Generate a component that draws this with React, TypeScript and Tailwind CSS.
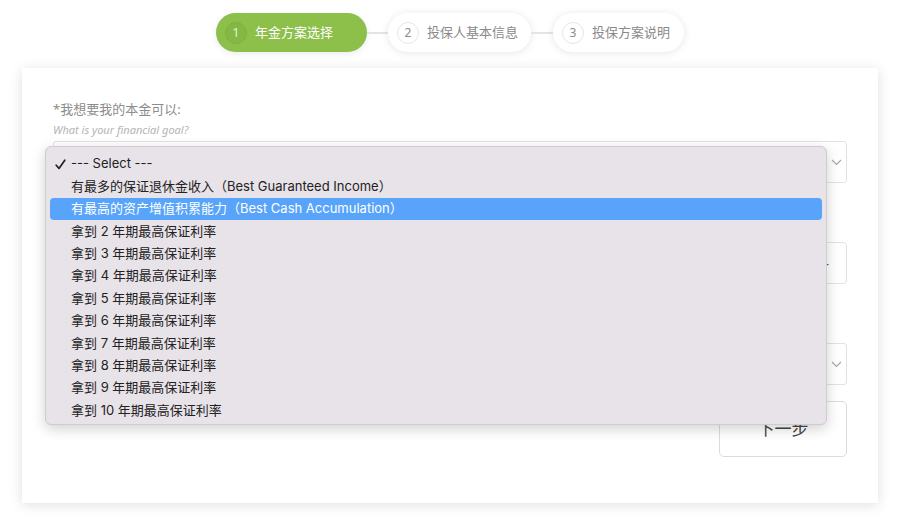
import React from "react";

const items = [
  "有最多的保证退休金收入（Best Guaranteed Income）",
  "有最高的资产增值积累能力（Best Cash Accumulation）",
  "拿到 2 年期最高保证利率",
  "拿到 3 年期最高保证利率",
  "拿到 4 年期最高保证利率",
  "拿到 5 年期最高保证利率",
  "拿到 6 年期最高保证利率",
  "拿到 7 年期最高保证利率",
  "拿到 8 年期最高保证利率",
  "拿到 9 年期最高保证利率",
  "拿到 10 年期最高保证利率",
];

function Chevron() {
  return (
    <svg width="11" height="7" viewBox="0 0 11 7" className="shrink-0">
      <path d="M1 1l4.5 4.5L10 1" fill="none" stroke="#a8a8a8" strokeWidth="1.2" />
    </svg>
  );
}

function Step({ n, label, active, w }: { n: number; label: string; active?: boolean; w: string }) {
  return (
    <div
      className={`${w} h-[39px] rounded-full flex items-center pl-[9px] ${
        active
          ? "bg-[#8cc04b] shadow-[0_2px_6px_rgba(0,0,0,0.08)]"
          : "bg-white shadow-[0_1px_8px_rgba(0,0,0,0.10)]"
      }`}
    >
      <div
        className={`w-[22px] h-[22px] rounded-full flex items-center justify-center text-[12px] ${
          active
            ? "bg-[#84b845] border border-[#7fb040] text-[#e8f3da]"
            : "bg-white border border-[#e6e6e6] text-[#8a8a8a]"
        }`}
      >
        {n}
      </div>
      <span className={`ml-[8px] text-[13px] ${active ? "text-white" : "text-[#8a8a8a]"}`}>{label}</span>
    </div>
  );
}

export default function App() {
  return (
    <div
      className="w-[900px] h-[520px] bg-white overflow-hidden relative"
      style={{ fontFamily: '"Noto Sans", "Noto Sans CJK SC", sans-serif' }}
    >
      <div className="flex items-center justify-center pt-[13px]">
        <Step n={1} label="年金方案选择" active w="w-[151px]" />
        <div className="w-[21px] h-[2px] bg-[#e4e4e4]" />
        <Step n={2} label="投保人基本信息" w="w-[143px]" />
        <div className="w-[22px] h-[2px] bg-[#e4e4e4]" />
        <Step n={3} label="投保方案说明" w="w-[131px]" />
      </div>

      <div className="relative mx-[22px] mt-[16px] bg-white shadow-[0_2px_12px_rgba(0,0,0,0.13)] px-[31px] pt-[32px] pb-[46px]">
        <div className="text-[13px] leading-[18px] text-[#8c8c8c]">*我想要我的本金可以:</div>
        <div className="mt-[4px] text-[11px] leading-[16px] italic text-[#b4b4b4]">What is your financial goal?</div>
        <div className="mt-[3px] h-[42px] border border-[#e2e2e2] rounded-[3px] flex items-center justify-end pr-[4px]">
          <Chevron />
        </div>

        <div className="mt-[59px] flex h-[42px]">
          <div className="flex-1 border border-[#e2e2e2] rounded-l-[3px]" />
          <div className="w-[128px] border border-[#e2e2e2] rounded-[4px] flex items-center justify-end pr-[17px] text-[14px] text-[#555]">
            -
          </div>
        </div>

        <div className="mt-[59px] h-[42px] border border-[#e2e2e2] rounded-[3px] flex items-center justify-end pr-[4px]">
          <Chevron />
        </div>

        <div className="mt-[16px] flex justify-end">
          <div className="w-[128px] h-[56px] border border-[#dcdcdc] rounded-[5px] flex items-center justify-center text-[17px] text-[#444]">
            下一步
          </div>
        </div>

        <div
          className="absolute left-[23px] top-[78px] w-[782px] h-[279px] bg-[#e8e3e9] rounded-[6px] border border-[#cfcbd0] shadow-[0_4px_14px_rgba(0,0,0,0.18)] pt-[6px] pb-[4px] px-[4px] text-[13px] text-[#222]"
          style={{ fontFamily: 'Inter, "Noto Sans CJK SC", sans-serif' }}
        >
          <div className="h-[22.4px] flex items-center">
            <span className="w-[21px] pl-[5px] flex items-center">
              <svg width="11" height="11" viewBox="0 0 11 11">
                <path d="M1.2 6.2 L4 9.4 L9.8 1.2" fill="none" stroke="#222" strokeWidth="1.7" strokeLinecap="round" strokeLinejoin="round" />
              </svg>
            </span>
            <span>--- Select ---</span>
          </div>
          {items.map((t, i) => (
            <div
              key={i}
              className={`h-[22.4px] flex items-center pl-[21px] rounded-[4px] ${
                i === 1 ? "bg-[#58a4fb] text-white" : ""
              }`}
            >
              {t}
            </div>
          ))}
        </div>
      </div>
    </div>
  );
}
